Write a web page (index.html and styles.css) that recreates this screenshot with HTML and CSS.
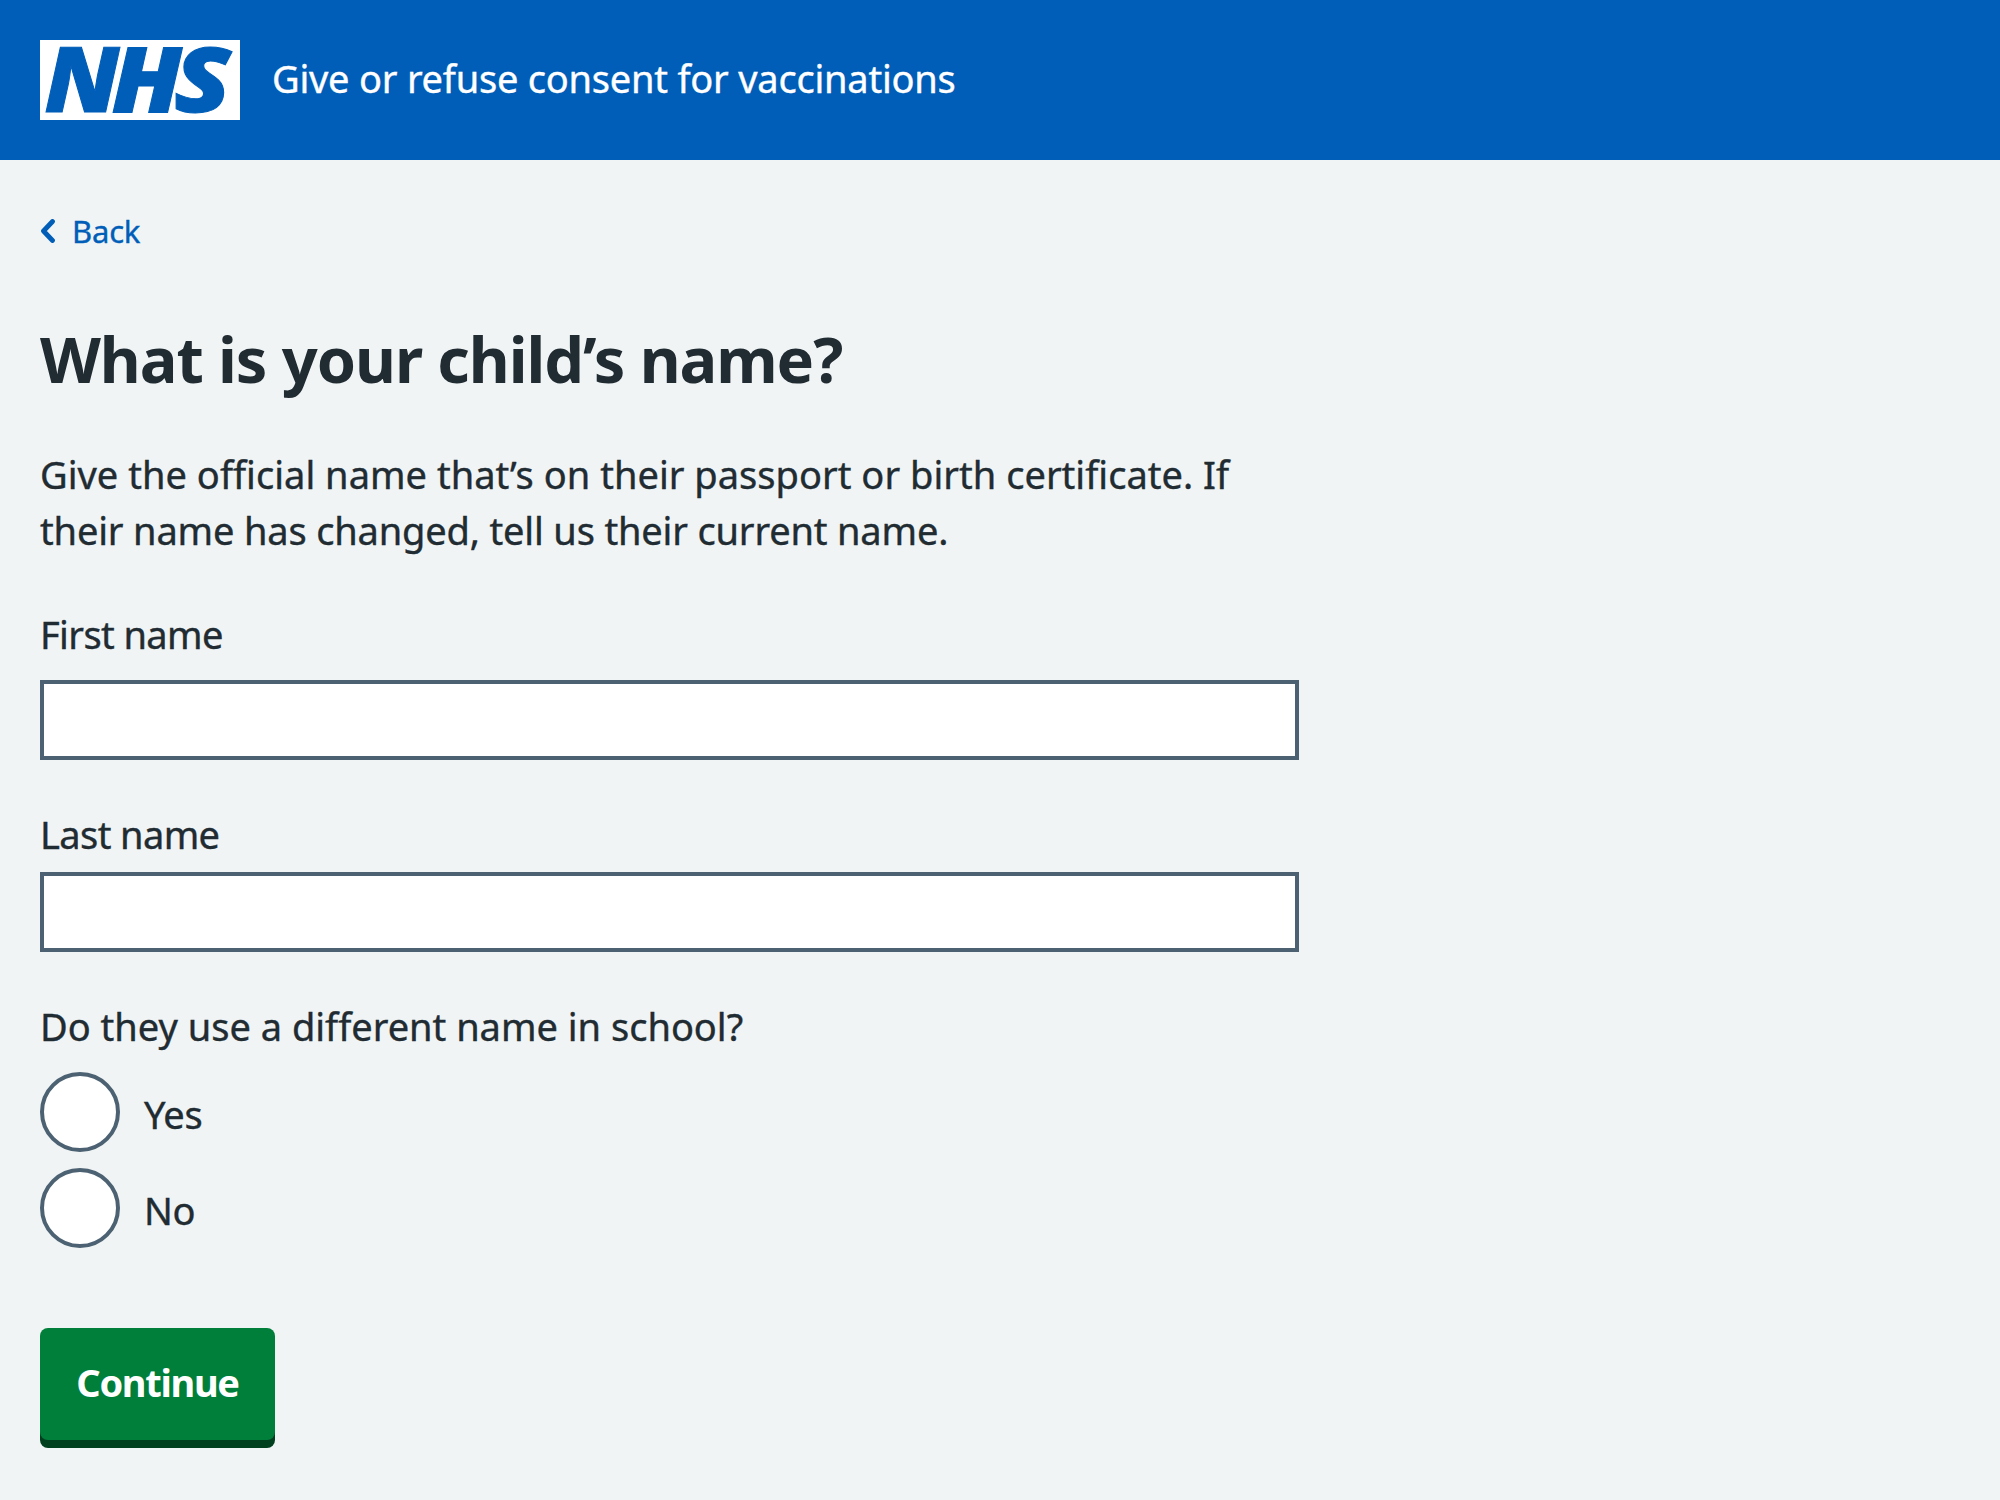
FILE: index.html
```html
<!DOCTYPE html>
<html lang="en">
<head>
<meta charset="utf-8">
<title>What is your child’s name?</title>
<link rel="stylesheet" href="styles.css">
</head>
<body>
<header class="header">
  <svg class="logo" viewBox="0 0 200 80" role="img" aria-label="NHS">
    <rect width="200" height="80" fill="#fff"/>
    <g class="logo-letters">
      <text x="4.5" y="72" textLength="75" lengthAdjust="spacingAndGlyphs">N</text>
      <text x="71.5" y="72" textLength="70.5" lengthAdjust="spacingAndGlyphs">H</text>
      <text x="134" y="72" textLength="57" lengthAdjust="spacingAndGlyphs">S</text>
    </g>
  </svg>
  <span class="service">Give or refuse consent for vaccinations</span>
</header>
<main class="main">
  <a class="back"><svg class="chevron" viewBox="0 0 16 24"><path d="M12.5 2.5 3.5 12l9 9.5"/></svg><span class="back-text">Back</span></a>
  <h1 class="title">What is your child’s name?</h1>
  <p class="intro"><span class="line-one">Give the official name that’s on their passport or birth certificate. If</span><br><span class="line-two">their name has changed, tell us their current name.</span></p>
  <div class="field field-first">
    <label class="label" for="first">First name</label>
    <input class="input" id="first" type="text">
  </div>
  <div class="field field-last">
    <label class="label" for="last">Last name</label>
    <input class="input" id="last" type="text">
  </div>
  <fieldset class="radios">
    <legend class="label question">Do they use a different name in school?</legend>
    <label class="radio"><input class="circle" type="radio" name="different"><span class="yes">Yes</span></label>
    <label class="radio"><input class="circle" type="radio" name="different"><span class="no">No</span></label>
  </fieldset>
  <button class="button">Continue</button>
</main>
</body>
</html>
```
FILE: styles.css
```css
* { box-sizing: border-box; }
body {
  margin: 0;
  min-height: 1500px;
  background: #f0f4f5;
  color: #212b32;
  font-family: "Noto Sans", "Open Sans", sans-serif;
  font-size: 38px;
  line-height: 56px;
  font-variant-ligatures: none;
  -webkit-text-stroke: 0.4px currentColor;
}
.header {
  display: flex;
  align-items: center;
  gap: 32px;
  height: 160px;
  padding: 0 40px;
  background: #005eb8;
  color: #fff;
}
.logo { width: 200px; height: 80px; overflow: visible; }
.logo-letters {
  fill: #005eb8;
  stroke: #005eb8;
  stroke-width: 1px;
  -webkit-text-stroke: 0;
  font-family: "Open Sans", sans-serif;
  font-size: 91px;
  font-weight: 800;
  font-style: italic;
}
.service { padding-bottom: 4px; letter-spacing: -0.22px; white-space: nowrap; }
.main {
  display: flex;
  flex-direction: column;
  align-items: flex-start;
  width: 1339px;
  padding: 47px 40px 0;
}
.back {
  display: flex;
  align-items: center;
  gap: 16px;
  color: #005eb8;
  font-size: 31px;
  line-height: 48px;
  letter-spacing: -0.2px;
}
.chevron { width: 16px; height: 24px; margin-top: -1px; fill: none; stroke: #005eb8; stroke-width: 4.8; stroke-linecap: round; stroke-linejoin: round; }
.title { margin: 64px 0 0; font-size: 63px; line-height: 80px; font-weight: 700; letter-spacing: -1.05px; white-space: nowrap; -webkit-text-stroke: 0; }
.intro { margin: 47px 0 0; white-space: nowrap; }
.line-one { letter-spacing: 0.03px; }
.line-two { letter-spacing: -0.16px; }
.field { display: flex; flex-direction: column; width: 100%; }
.field-first { gap: 18px; margin-top: 48px; }
.field-last { gap: 10px; margin-top: 46px; }
.label { display: block; padding: 0; align-self: flex-start; white-space: nowrap; }
.field .label { letter-spacing: -0.6px; }
.input { width: 100%; height: 80px; margin: 0; padding: 8px; border: 4px solid #4c6272; border-radius: 0; background: #fff; font: inherit; }
.radios { margin: 46px 0 0; padding: 0; border: 0; }
.question { margin-bottom: 18px; }
.radio { display: flex; align-items: center; gap: 24px; height: 80px; margin-bottom: 16px; }
.radio span { padding-top: 4px; letter-spacing: -0.3px; }
.circle { appearance: none; width: 80px; height: 80px; margin: 0; border: 4px solid #4c6272; border-radius: 50%; background: #fff; }
.button {
  width: 235px;
  height: 112px;
  margin: 64px 0 0;
  padding: 0 0 4px;
  border: 0;
  border-radius: 8px;
  background: #007f3b;
  box-shadow: 0 8px 0 #00401e;
  color: #fff;
  font: 700 38px/56px "Noto Sans", "Open Sans", sans-serif;
  letter-spacing: -1.3px;
  -webkit-text-stroke: 0;
}
```
